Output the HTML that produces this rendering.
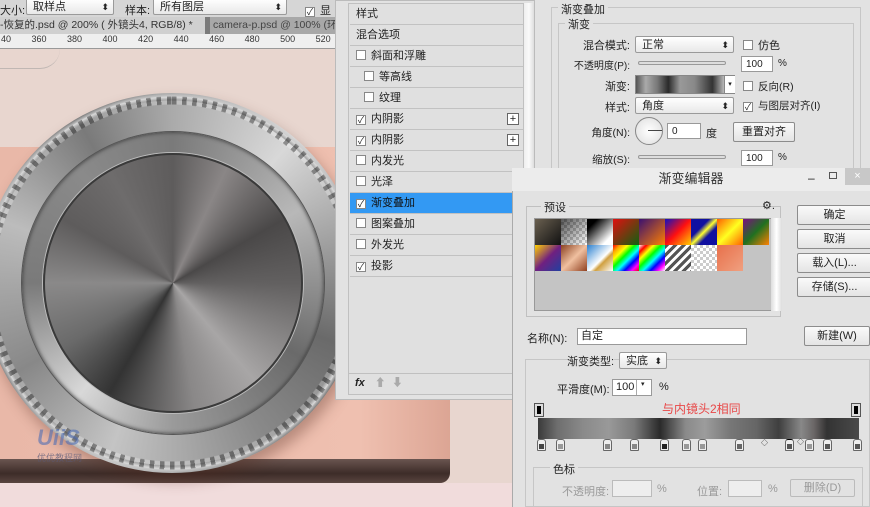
<!DOCTYPE html>
<html><head><meta charset="utf-8"><style>
*{margin:0;padding:0;box-sizing:border-box}
body{width:870px;height:507px;overflow:hidden;position:relative;background:#e6d3cc;font-family:"Liberation Sans","Noto Sans CJK SC",sans-serif;font-size:11px;color:#222}
.a{position:absolute}
.sel{position:absolute;background:linear-gradient(#fff,#e8e8e8);border:1px solid #9a9a9a;border-radius:2px;font-size:11px;padding:1px 6px;height:17px;line-height:14px}
.sel:after{content:"⬍";position:absolute;right:4px;top:1px;font-size:9px}
.inp{position:absolute;background:#fff;border:1px solid #999;height:16px;font-size:10px;padding:1px 4px;line-height:13px}
.btn{position:absolute;background:linear-gradient(#fafafa,#e4e4e4);border:1px solid #8c8c8c;border-radius:2px;text-align:center;font-size:11px;line-height:18px;height:20px}
.cb{display:inline-block;width:10px;height:10px;border:1px solid #888;background:#fff;vertical-align:-1px;margin-right:5px;font-size:9px;line-height:8px;text-align:center}
.li{position:absolute;left:350px;width:173px;height:21px;border-bottom:1px solid #c2c2c2;background:#e0e0e0;line-height:20px;padding-left:6px;font-size:11px}
.lb{position:absolute;text-align:right;font-size:11px}
.stop{position:absolute;width:9px;height:12px;border:1px solid #666;background:#eee;border-radius:3px 3px 1px 1px}
.stop i{position:absolute;left:1px;top:4px;width:5px;height:5px;background:#888}
</style></head><body>
<div class="a" style="left:0;top:0;width:335px;height:17px;background:#d6d6d6"></div>
<div class="a" style="left:0;top:2px;font-size:11px">大小:</div>
<div class="sel" style="left:26px;top:-2px;width:88px">取样点</div>
<div class="a" style="left:125px;top:2px">样本:</div>
<div class="sel" style="left:153px;top:-2px;width:134px">所有图层</div>
<div class="a" style="left:305px;top:2px"><span class="cb">✓</span>显</div>
<div class="a" style="left:0;top:17px;width:335px;height:17px;background:#7a7a7a"></div>
<div class="a" style="left:0;top:17px;width:205px;height:17px;background:#d0d0d0;font-size:10.5px;line-height:17px;color:#333">-恢复的.psd @ 200% ( 外镜头4, RGB/8) * &nbsp;&nbsp;×</div>
<div class="a" style="left:210px;top:17px;width:125px;height:17px;background:#a8a8a8;font-size:10.5px;line-height:17px;color:#444;padding-left:3px;white-space:nowrap;overflow:hidden">camera-p.psd @ 100% (环</div>
<div class="a" style="left:0;top:34px;width:335px;height:15px;background:#efefef;border-bottom:1px solid #999;font-size:9px;color:#333;white-space:nowrap;word-spacing:18px;padding-left:1px">40 360 380 400 420 440 460 480 500 520 54</div>
<div class="a" style="left:0;top:49px;width:512px;height:458px;background:#e8d6cf"></div>
<div class="a" style="left:0;top:147px;width:450px;height:315px;background:linear-gradient(90deg,#e9b8a8,#efc0b0 80%,#dca594)"></div>
<div class="a" style="left:0;top:459px;width:450px;height:24px;background:linear-gradient(#6a5550,#3d2c28 60%,#5a4540);border-radius:0 0 10px 0"></div>
<div class="a" style="left:0;top:483px;width:512px;height:24px;background:#f1dcdc"></div>
<div class="a" style="left:0;top:49px;width:60px;height:20px;border-bottom:1px solid #999;border-radius:0 0 60px 0;opacity:.5"></div>
<!-- lens -->
<div class="a" style="left:-18px;top:93px;width:380px;height:380px;border-radius:50%;background:radial-gradient(circle,transparent 182px,#888 183px,#ccc 186px,transparent 190px),conic-gradient(from 0deg,#aaa,#d8d8d8 40deg,#999 80deg,#6a6a6a 110deg,#8a8a8a 150deg,#c4c4c4 200deg,#888 240deg,#bcbcbc 290deg,#7a7a7a 330deg,#aaa);box-shadow:4px 8px 14px rgba(80,40,30,.35)"></div>
<div class="a" style="left:-18px;top:93px;width:380px;height:380px;border-radius:50%;background:repeating-conic-gradient(rgba(50,50,50,.45) 0 1.4deg,rgba(255,255,255,.25) 1.4deg 3.2deg);-webkit-mask:radial-gradient(circle,transparent 178px,#000 179px,#000 186px,transparent 187px);mask:radial-gradient(circle,transparent 178px,#000 179px,#000 186px,transparent 187px)"></div>
<div class="a" style="left:22px;top:132px;width:302px;height:302px;border-radius:50%;background:conic-gradient(#7a7a7a,#b8b8b8 60deg,#6a6a6a 120deg,#9a9a9a 180deg,#d8d8d8 220deg,#7a7a7a 270deg,#8a8a8a 320deg,#7a7a7a);box-shadow:0 0 0 1px #555,inset 0 0 4px #333"></div>
<div class="a" style="left:43px;top:153px;width:260px;height:260px;border-radius:50%;border:2px solid #3a3a3a;box-shadow:0 0 0 1px #bbb;background:conic-gradient(from 0deg,#5e5c5c,#8a8686 25deg,#4a4848 60deg,#626060 90deg,#a8a6a6 140deg,#8a8888 170deg,#333 210deg,#6a6a6a 240deg,#8a8989 270deg,#5e5c5c 300deg,#6e6c6c 330deg,#5e5c5c)"></div>
<div class="a" style="left:37px;top:425px;font-size:22px;font-weight:bold;font-style:italic;color:rgba(80,110,180,.6)">UiiS</div>
<div class="a" style="left:37px;top:451px;font-size:9px;color:rgba(90,90,120,.7)">优优教程网</div>
<!-- layer style panel -->
<div class="a" style="left:335px;top:0;width:200px;height:400px;background:#e2e2e2;border:1px solid #bbb"></div>
<div class="a" style="left:348px;top:3px;width:176px;height:392px;border:1px solid #c0c0c0;background:#e0e0e0"></div>
<div class="a" style="left:524px;top:3px;width:10px;height:390px;background:linear-gradient(90deg,#eee,#fafafa,#ddd)"></div>
<div class="li" style="top:4px">样式</div>
<div class="li" style="top:25px">混合选项</div>
<div class="li" style="top:46px"><span class="cb"></span>斜面和浮雕</div>
<div class="li" style="top:67px;padding-left:14px"><span class="cb"></span>等高线</div>
<div class="li" style="top:88px;padding-left:14px"><span class="cb"></span>纹理</div>
<div class="li" style="top:109px"><span class="cb">✓</span>内阴影<span style="position:absolute;right:4px;top:4px;width:12px;height:12px;border:1px solid #666;background:#fff;line-height:10px;text-align:center">+</span></div>
<div class="li" style="top:130px"><span class="cb">✓</span>内阴影<span style="position:absolute;right:4px;top:4px;width:12px;height:12px;border:1px solid #666;background:#fff;line-height:10px;text-align:center">+</span></div>
<div class="li" style="top:151px"><span class="cb"></span>内发光</div>
<div class="li" style="top:172px"><span class="cb"></span>光泽</div>
<div class="li" style="top:193px;background:#3399f3;color:#111"><span class="cb">✓</span>渐变叠加</div>
<div class="li" style="top:214px"><span class="cb"></span>图案叠加</div>
<div class="li" style="top:235px"><span class="cb"></span>外发光</div>
<div class="li" style="top:256px"><span class="cb">✓</span>投影</div>
<div class="a" style="left:349px;top:373px;width:174px;height:20px;border-top:1px solid #c0c0c0;font-size:11px;line-height:18px;padding-left:6px;font-style:italic;font-weight:bold">fx<span style="font-style:normal;color:#aaa;font-weight:normal;margin-left:10px">⬆ &nbsp;⬇</span></div>
<!-- right settings -->
<div class="a" style="left:535px;top:0;width:335px;height:168px;background:#e2e2e2"></div>
<div class="a" style="left:551px;top:7px;width:310px;height:170px;border:1px solid #c6c6c6"></div>
<div class="a" style="left:558px;top:1px;background:#e2e2e2;padding:0 3px">渐变叠加</div>
<div class="a" style="left:558px;top:23px;width:296px;height:150px;border:1px solid #c6c6c6"></div>
<div class="a" style="left:565px;top:16px;background:#e2e2e2;padding:0 3px">渐变</div>
<div class="lb" style="left:560px;width:70px;top:37px">混合模式:</div>
<div class="sel" style="left:635px;top:36px;width:99px">正常</div>
<div class="a" style="left:743px;top:37px"><span class="cb"></span>仿色</div>
<div class="lb" style="left:540px;width:90px;top:57px;font-size:10px">不透明度(P):</div>
<div class="a" style="left:638px;top:61px;width:88px;height:4px;border:1px solid #999;border-radius:2px;background:#ddd"></div>
<div class="inp" style="left:741px;top:56px;width:32px">100</div><div class="a" style="left:778px;top:58px;font-size:10px">%</div>
<div class="lb" style="left:560px;width:70px;top:78px">渐变:</div>
<div class="a" style="left:635px;top:75px;width:100px;height:19px;border:1px solid #888;background:linear-gradient(90deg,#555,#aaa 10%,#777 22%,#2a2a2a 33%,#999 45%,#888 60%,#333 78%,#bbb 90%,#666)"></div>
<div class="a" style="left:724px;top:76px;width:11px;height:17px;background:#fff;border-left:1px solid #888;font-size:7px;text-align:center;line-height:17px">▾</div>
<div class="a" style="left:743px;top:79px;font-size:10.5px"><span class="cb"></span>反向(R)</div>
<div class="lb" style="left:560px;width:70px;top:99px">样式:</div>
<div class="sel" style="left:635px;top:97px;width:99px">角度</div>
<div class="a" style="left:743px;top:98px;font-size:10.5px"><span class="cb">✓</span>与图层对齐(I)</div>
<div class="lb" style="left:560px;width:70px;top:125px;font-size:10.5px">角度(N):</div>
<div class="a" style="left:635px;top:117px;width:28px;height:28px;border-radius:50%;border:1px solid #888;background:radial-gradient(#fff,#ddd)"></div>
<div class="a" style="left:648px;top:130px;width:14px;height:1px;background:#444"></div>
<div class="inp" style="left:667px;top:123px;width:34px">0</div><div class="a" style="left:706px;top:125px">度</div>
<div class="btn" style="left:733px;top:122px;width:62px">重置对齐</div>
<div class="lb" style="left:560px;width:70px;top:152px;font-size:10.5px">缩放(S):</div>
<div class="a" style="left:638px;top:155px;width:88px;height:4px;border:1px solid #999;border-radius:2px;background:#ddd"></div>
<div class="inp" style="left:741px;top:150px;width:32px">100</div><div class="a" style="left:778px;top:152px;font-size:10px">%</div>
<!-- gradient editor -->
<div class="a" style="left:512px;top:168px;width:358px;height:339px;background:#e2e2e2;border-left:1px solid #aaa"></div>
<div class="a" style="left:512px;top:168px;width:358px;height:23px;background:#ececec;text-align:center;line-height:22px;font-size:13px;color:#333">渐变编辑器</div>
<div class="a" style="left:808px;top:171px;font-size:12px">–</div>
<div class="a" style="left:829px;top:172px;width:8px;height:7px;border:1px solid #555"></div>
<div class="a" style="left:845px;top:168px;width:25px;height:17px;background:#c8c8c8;color:#fff;text-align:center;line-height:17px">×</div>
<div class="a" style="left:526px;top:206px;width:255px;height:111px;border:1px solid #c0c0c0"></div>
<div class="a" style="left:541px;top:199px;background:#e2e2e2;padding:0 3px;font-size:11px">预设</div>
<div class="a" style="left:762px;top:199px;font-size:11px">⚙.</div>
<div class="a" style="left:534px;top:218px;width:238px;height:93px;background:#c4c4c4;border:1px solid #999"></div>
<div class="a" style="left:771px;top:218px;width:11px;height:93px;background:linear-gradient(90deg,#ddd,#fff,#ddd)"></div>
<div class="a" style="left:535px;top:219px;display:grid;grid-template-columns:repeat(9,26px);grid-auto-rows:26px;gap:0">
<div style="background:linear-gradient(135deg,#6a6050,#111)"></div>
<div style="background:repeating-conic-gradient(#ccc 0 25%,#fff 0 50%) 0 0/6px 6px,linear-gradient(135deg,#555,transparent);background-blend-mode:multiply"></div>
<div style="background:linear-gradient(135deg,#000 20%,#fff 80%)"></div>
<div style="background:linear-gradient(135deg,#e01010,#106010)"></div>
<div style="background:linear-gradient(135deg,#3a1070,#ff8000)"></div>
<div style="background:linear-gradient(135deg,#1010c0,#ff1010 50%,#ffd000)"></div>
<div style="background:linear-gradient(135deg,#1010a0 35%,#ffff30 50%,#1010a0 65%)"></div>
<div style="background:linear-gradient(135deg,#ff6000,#ffff20 50%,#ff6000)"></div>
<div style="background:linear-gradient(135deg,#7a1080,#207020 50%,#ff8000)"></div>
<div style="background:linear-gradient(135deg,#ffd000,#702080 50%,#2040a0)"></div>
<div style="background:linear-gradient(135deg,#8a4020,#f0c0a0 50%,#904020)"></div>
<div style="background:linear-gradient(135deg,#2a80d0,#fff 55%,#d0a040 65%,#fff)"></div>
<div style="background:linear-gradient(135deg,red,orange,yellow,lime,cyan,blue,magenta,red)"></div>
<div style="background:linear-gradient(135deg,#fff,red,yellow,lime,cyan,blue,magenta,#fff)"></div>
<div style="background:repeating-linear-gradient(135deg,#555 0 3px,#fff 3px 6px)"></div>
<div style="background:repeating-conic-gradient(#ccc 0 25%,#fff 0 50%) 0 0/6px 6px"></div>
<div style="background:linear-gradient(135deg,#e8704a,#f0a080)"></div>
</div>
<div class="btn" style="left:797px;top:205px;width:75px">确定</div>
<div class="btn" style="left:797px;top:229px;width:75px">取消</div>
<div class="btn" style="left:797px;top:253px;width:75px">载入(L)...</div>
<div class="btn" style="left:797px;top:277px;width:75px">存储(S)...</div>
<div class="a" style="left:527px;top:330px;font-size:11px">名称(N):</div>
<div class="a" style="left:577px;top:328px;width:170px;height:17px;background:#fff;border:1px solid #999;padding-left:3px;line-height:15px">自定</div>
<div class="btn" style="left:804px;top:326px;width:66px">新建(W)</div>
<div class="a" style="left:525px;top:359px;width:345px;height:148px;border:1px solid #c6c6c6"></div>
<div class="a" style="left:567px;top:353px;font-size:11px;background:#e2e2e2">渐变类型:</div>
<div class="sel" style="left:619px;top:352px;width:48px">实底</div>
<div class="a" style="left:557px;top:381px;font-size:11px">平滑度(M):</div>
<div class="a" style="left:612px;top:379px;width:40px;height:17px;background:#fff;border:1px solid #999;padding-left:3px;line-height:15px">100</div>
<div class="a" style="left:636px;top:380px;width:1px;height:15px;background:#aaa"></div>
<div class="a" style="left:641px;top:380px;font-size:7px">▾</div>
<div class="a" style="left:659px;top:381px">%</div>
<div class="a" style="left:662px;top:400px;color:#e84848;font-size:12px">与内镜头2相同</div>
<div class="a" style="left:535px;top:404px;width:8px;height:12px;background:#000;border:2px solid #ddd;outline:1px solid #555"></div>
<div class="a" style="left:852px;top:404px;width:8px;height:12px;background:#000;border:2px solid #ddd;outline:1px solid #555"></div>
<div class="a" style="left:538px;top:418px;width:321px;height:21px;background:linear-gradient(90deg,#3a3a3a,#6e6e6e 6%,#8a8a8a 14%,#999 22%,#7a7a7a 30%,#2a2a2a 38%,#8a8a8a 46%,#9c9c9c 52%,#777 60%,#666 68%,#3f3f3f 75%,#888 82%,#6a6666 86%,#333 90%,#4a4a4a)"></div>
<div class="stop" style="left:537px;top:439px"><i style="background:#444"></i></div>
<div class="stop" style="left:556px;top:439px"><i style="background:#999"></i></div>
<div class="stop" style="left:603px;top:439px"><i style="background:#888"></i></div>
<div class="stop" style="left:630px;top:439px"><i style="background:#888"></i></div>
<div class="stop" style="left:660px;top:439px"><i style="background:#222"></i></div>
<div class="stop" style="left:682px;top:439px"><i style="background:#999"></i></div>
<div class="stop" style="left:698px;top:439px"><i style="background:#999"></i></div>
<div class="stop" style="left:735px;top:439px"><i style="background:#666"></i></div>
<div class="a" style="left:761px;top:438px;font-size:7px">◇</div>
<div class="stop" style="left:785px;top:439px;border-top-color:#000"><i style="background:#555"></i></div>
<div class="a" style="left:797px;top:437px;font-size:7px">◇</div>
<div class="stop" style="left:805px;top:439px"><i style="background:#999"></i></div>
<div class="stop" style="left:823px;top:439px"><i style="background:#555"></i></div>
<div class="stop" style="left:853px;top:439px"><i style="background:#555"></i></div>
<div class="a" style="left:533px;top:467px;width:330px;height:40px;border:1px solid #c6c6c6"></div>
<div class="a" style="left:550px;top:461px;font-size:11px;background:#e2e2e2;padding:0 3px">色标</div>
<div class="a" style="left:562px;top:483px;color:#999">不透明度:</div>
<div class="a" style="left:612px;top:480px;width:40px;height:17px;background:#eee;border:1px solid #bbb"></div>
<div class="a" style="left:657px;top:483px;color:#999">%</div>
<div class="a" style="left:697px;top:483px;color:#999">位置:</div>
<div class="a" style="left:728px;top:480px;width:34px;height:17px;background:#eee;border:1px solid #bbb"></div>
<div class="a" style="left:768px;top:483px;color:#999">%</div>
<div class="a" style="left:790px;top:479px;width:65px;height:18px;border:1px solid #bbb;color:#999;text-align:center;line-height:16px;border-radius:2px">删除(D)</div>
</body></html>
